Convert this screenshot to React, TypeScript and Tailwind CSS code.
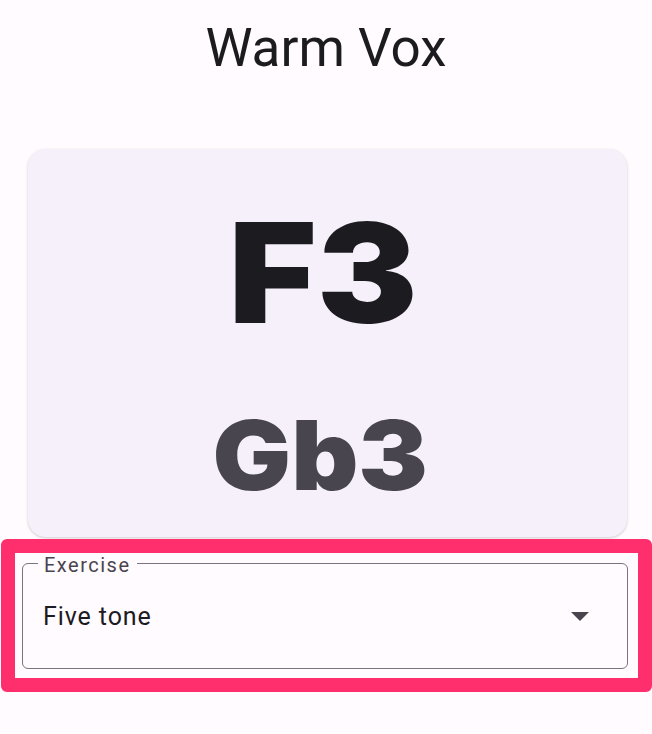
import React from "react";

export default function App() {
  return (
    <div className="w-[652px] min-h-[734px] bg-[#fffbfe] overflow-hidden">
      <h1
        className="pt-[22px] text-center text-[53px] leading-none font-normal text-[#1c1b1f]"
        style={{ fontFamily: "Roboto, 'Liberation Sans', sans-serif" }}
      >
        Warm Vox
      </h1>

      <div className="mt-[74px] ml-[28px] w-[599px] h-[388px] rounded-[18px] bg-[#f5f0fa] shadow-[0_1px_3px_rgba(0,0,0,0.2)] flex flex-col items-center pt-[54px]">
        <div
          className="mr-[8px] text-[139px] leading-none font-black text-[#1c1b1f] scale-x-[1.085]"
          style={{ fontFamily: "Inter, 'Noto Sans', sans-serif" }}
        >
          F3
        </div>
        <div
          className="mr-[15px] mt-[65px] text-[96px] leading-none font-black text-[#49454f] scale-x-[1.085]"
          style={{ fontFamily: "Inter, 'Noto Sans', sans-serif" }}
        >
          Gb3
        </div>
      </div>

      <div className="mt-[2px] ml-[1px] w-[651px] h-[153px] border-[14px] border-[#ff2e6c] rounded-[6px] bg-[#fffbfe] pl-[7px] pt-[10px]">
        <div
          className="relative w-[606px] h-[106px] border-[1.5px] border-[#79747e] rounded-[6px] flex items-center justify-between pl-[20px] pr-[38px]"
          style={{ fontFamily: "Roboto, 'Liberation Sans', sans-serif" }}
        >
          <span className="absolute left-[15px] top-[-9px] px-[6px] bg-[#fffbfe] text-[20px] leading-none tracking-[1.5px] text-[#49454f]">
            Exercise
          </span>
          <span className="text-[25px] leading-none tracking-[0.9px] text-[#1c1b1f]">Five tone</span>
          <svg width="18" height="9" viewBox="0 0 18 9">
            <path d="M0 0 L18 0 L9 9 Z" fill="#49454f" />
          </svg>
        </div>
      </div>
    </div>
  );
}
